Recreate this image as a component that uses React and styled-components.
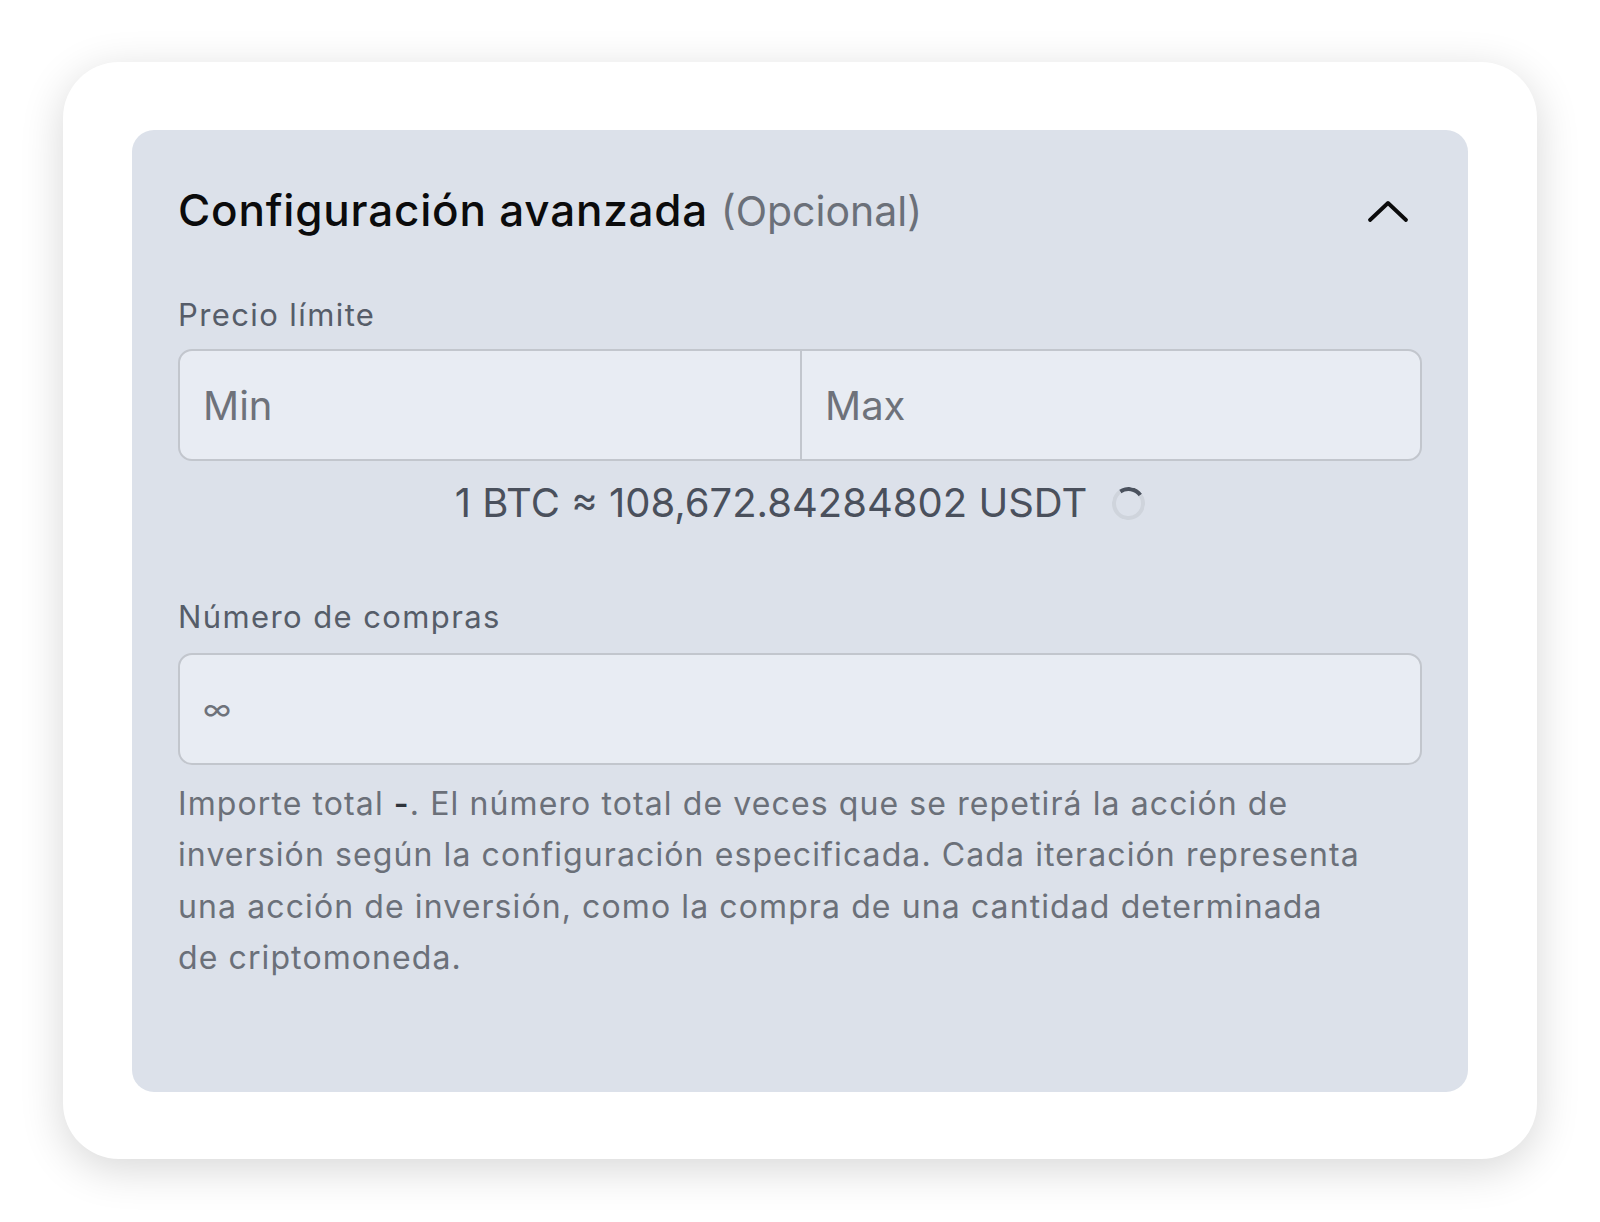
import React from 'react';
import styled, { createGlobalStyle } from 'styled-components';

const GlobalStyle = createGlobalStyle`
  html, body {
    margin: 0;
    padding: 0;
    background: #ffffff;
    font-family: Inter, "Noto Sans", "Liberation Sans", sans-serif;
  }
`;

const Page = styled.div`
  padding: 62px 63px;
`;

const Card = styled.div`
  background: #ffffff;
  border-radius: 56px;
  box-shadow: 0 10px 44px rgba(0, 0, 0, 0.16);
  padding: 68px 69px 67px;
`;

const Panel = styled.section`
  background: #dce1ea;
  border-radius: 22px;
  padding: 53px 46px 109px 46px;
`;

const Header = styled.div`
  display: flex;
  align-items: center;
  justify-content: space-between;
`;

const Title = styled.h2`
  margin: 0;
  font-size: 44px;
  line-height: 54px;
  font-weight: 500;
  letter-spacing: 0.8px;
  color: #0b0b0c;
`;

const Optional = styled.span`
  font-size: 41px;
  font-weight: 400;
  letter-spacing: 0;
  color: #6b7079;
`;

const ToggleButton = styled.button`
  border: 0;
  background: none;
  padding: 0;
  margin-right: 13px;
  display: flex;
  cursor: pointer;
`;

const Label = styled.div`
  font-size: 31px;
  line-height: 36px;
  letter-spacing: 1.4px;
  color: #565d69;
  margin-top: ${p => p.$top}px;
  margin-bottom: ${p => p.$bottom}px;
`;

const InputGroup = styled.div`
  display: grid;
  grid-template-columns: ${p => `repeat(${p.$cols}, 1fr)`};
  height: 112px;
  box-sizing: border-box;
  border: 2px solid #c2c6cd;
  border-radius: 14px;
  background: #e8ecf3;
  overflow: hidden;
`;

const Field = styled.input`
  border: 0;
  background: transparent;
  padding: 0 23px;
  font-family: inherit;
  font-size: ${p => p.$size || 40}px;
  color: #1f2329;
  outline: none;
  min-width: 0;
  & + & {
    border-left: 2px solid #c2c6cd;
  }
  &::placeholder {
    color: #6e727a;
  }
`;

const RateRow = styled.div`
  display: flex;
  justify-content: center;
  align-items: center;
  gap: 25px;
  margin-top: 18px;
  font-size: 40px;
  line-height: 48px;
  color: #4a505c;
`;

const Spinner = styled.span`
  width: 33px;
  height: 33px;
  box-sizing: border-box;
  border-radius: 50%;
  border: 4px solid #cfd4dc;
  border-top-color: #4b525e;
  transform: rotate(10deg);
`;

const Help = styled.p`
  margin: 13px 0 0;
  max-width: 1188px;
  font-size: 32px;
  line-height: 51.3px;
  letter-spacing: 1.1px;
  color: #6b7079;
`;

const Strong = styled.span`
  color: #2f343c;
  font-weight: 600;
`;

const ChevronUp = () => (
  <svg width="42" height="26" viewBox="0 0 42 26" fill="none">
    <polyline points="3,22 21,5 39,22" stroke="#0b0b0c" strokeWidth="3.8" strokeLinecap="round" strokeLinejoin="round" />
  </svg>
);

const App = () => {
  return (
    <Page>
      <GlobalStyle />
      <Card>
        <Panel>
          <Header>
            <Title>Configuración avanzada <Optional>(Opcional)</Optional></Title>
            <ToggleButton aria-label="Contraer"><ChevronUp /></ToggleButton>
          </Header>

          <Label $top={59} $bottom={16}>Precio límite</Label>
          <InputGroup $cols={2}>
            <Field placeholder="Min" />
            <Field placeholder="Max" />
          </InputGroup>
          <RateRow>
            <span>1 BTC ≈ 108,672.84284802 USDT</span>
            <Spinner />
          </RateRow>

          <Label $top={72} $bottom={18}>Número de compras</Label>
          <InputGroup $cols={1}>
            <Field placeholder="∞" $size={30} />
          </InputGroup>
          <Help>
            Importe total <Strong>-</Strong>. El número total de veces que se repetirá la acción de inversión según la configuración especificada. Cada iteración representa una acción de inversión, como la compra de una cantidad determinada de criptomoneda.
          </Help>
        </Panel>
      </Card>
    </Page>
  );
};

export default App;
